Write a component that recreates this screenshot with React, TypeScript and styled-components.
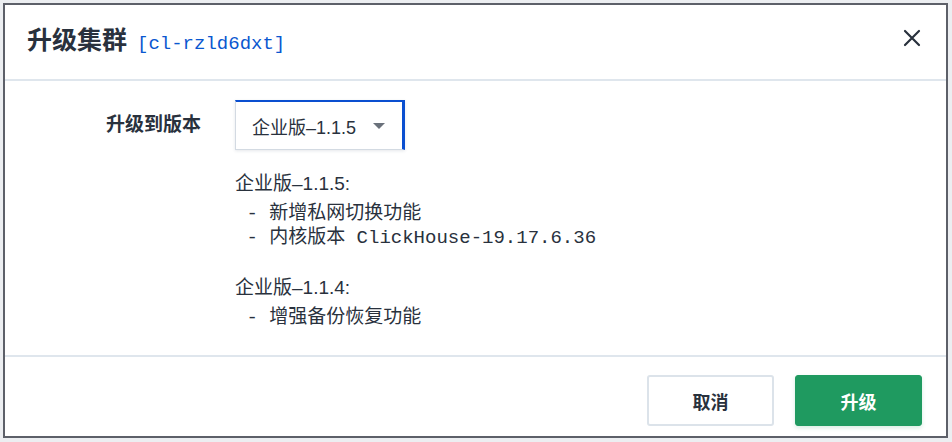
import React from "react";
import styled, { createGlobalStyle } from "styled-components";

const GlobalStyle = createGlobalStyle`
  html, body { margin: 0; padding: 0; }
  body {
    background: #eceef1;
    font-family: "Liberation Sans", "Noto Sans CJK SC", sans-serif;
    color: #29313d;
  }
  * { box-sizing: border-box; }
`;

const Page = styled.div`
  width: 952px;
  height: 442px;
  padding: 3px 4px 4px 3px;
`;

const Dialog = styled.div`
  width: 945px;
  height: 435px;
  background: #fff;
  border: 2px solid #5d6069;
  display: flex;
  flex-direction: column;
`;

const Header = styled.div`
  height: 76px;
  flex: none;
  display: flex;
  align-items: center;
  padding: 0 22px 8px 22px;
  border-bottom: 2px solid #dfe6ed;
`;

const Title = styled.h1`
  margin: 0;
  flex: 1;
  font-size: 25px;
  font-weight: 700;
  color: #29313d;
  display: flex;
  align-items: baseline;
  gap: 10px;
`;

const ClusterId = styled.span`
  font-family: "Liberation Mono", monospace;
  font-weight: 400;
  font-size: 19px;
  color: #0a57d0;
`;

const CloseButton = styled.button`
  border: 0;
  background: none;
  padding: 0;
  width: 24px;
  height: 24px;
  display: flex;
  align-items: center;
  justify-content: center;
  cursor: pointer;
`;

const Body = styled.div`
  height: 276px;
  flex: none;
  display: grid;
  grid-template-columns: 196px 1fr;
  column-gap: 34px;
  align-content: start;
  padding-top: 19px;
  border-bottom: 2px solid #dfe6ed;
  overflow: hidden;
`;

const Label = styled.div`
  text-align: right;
  font-size: 19px;
  font-weight: 600;
  line-height: 50px;
  color: #29313d;
`;

const Field = styled.div`
  display: flex;
  flex-direction: column;
`;

const Select = styled.div`
  width: 170px;
  height: 50px;
  display: flex;
  align-items: center;
  justify-content: space-between;
  padding: 0 17px 0 16px;
  border: 1px solid #d3dae2;
  border-top: 2px solid #0a4fd0;
  border-right: 3px solid #0a4fd0;
  box-shadow: 0 1px 3px rgba(40, 60, 90, 0.12);
  font-size: 18px;
  color: #29313d;
`;

const Caret = styled.span`
  width: 0;
  height: 0;
  border-left: 6px solid transparent;
  border-right: 6px solid transparent;
  border-top: 6px solid #6a717b;
`;

const Notes = styled.div`
  margin-top: 22px;
  font-size: 19px;
  color: #29313d;
`;

const Release = styled.div`
  & + & { margin-top: 26px; }
`;

const ReleaseTitle = styled.div`
  line-height: 24px;
  margin-bottom: 6px;
`;

const Item = styled.div`
  line-height: 24px;
  font-family: "Liberation Mono", "Noto Sans CJK SC", monospace;
  font-size: 19px;
  white-space: pre;
`;

const Footer = styled.div`
  flex: 1;
  display: flex;
  justify-content: flex-end;
  align-items: flex-start;
  gap: 21px;
  padding: 18px 24px 0 0;
`;

const Button = styled.button<{ $primary?: boolean }>`
  width: 127px;
  height: 51px;
  border-radius: 3px;
  font-family: "Liberation Sans", "Noto Sans CJK SC", sans-serif;
  font-size: 18px;
  font-weight: 700;
  cursor: pointer;
  border: ${(p) => (p.$primary ? "1px solid #1f9a60" : "2px solid #dce3ea")};
  background: ${(p) => (p.$primary ? "#1f9a60" : "#fff")};
  color: ${(p) => (p.$primary ? "#fff" : "#29313d")};
  box-shadow: ${(p) => (p.$primary ? "0 2px 4px rgba(31,154,96,0.18)" : "none")};
`;

export default function App() {
  return (
    <>
      <GlobalStyle />
      <Page>
        <Dialog>
          <Header>
            <Title>
              升级集群
              <ClusterId>[cl-rzld6dxt]</ClusterId>
            </Title>
            <CloseButton aria-label="close">
              <svg width="18" height="18" viewBox="0 0 18 18">
                <path d="M2 2 L16 16 M16 2 L2 16" stroke="#29313d" strokeWidth="2.2" strokeLinecap="round" />
              </svg>
            </CloseButton>
          </Header>
          <Body>
            <Label>升级到版本</Label>
            <Field>
              <Select>
                <span>企业版–1.1.5</span>
                <Caret />
              </Select>
              <Notes>
                <Release>
                  <ReleaseTitle>企业版–1.1.5:</ReleaseTitle>
                  <Item>{" - 新增私网切换功能"}</Item>
                  <Item>{" - 内核版本 ClickHouse-19.17.6.36"}</Item>
                </Release>
                <Release>
                  <ReleaseTitle>企业版–1.1.4:</ReleaseTitle>
                  <Item>{" - 增强备份恢复功能"}</Item>
                </Release>
              </Notes>
            </Field>
          </Body>
          <Footer>
            <Button>取消</Button>
            <Button $primary>升级</Button>
          </Footer>
        </Dialog>
      </Page>
    </>
  );
}
